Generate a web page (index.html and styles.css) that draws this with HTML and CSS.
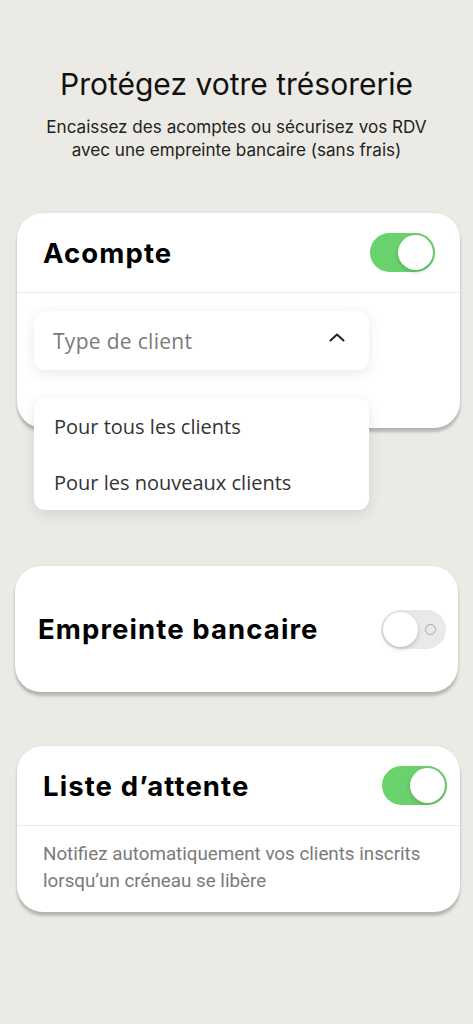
FILE: index.html
```html
<!DOCTYPE html>
<html lang="fr">
<head>
<meta charset="utf-8">
<title>Protégez votre trésorerie</title>
<link rel="stylesheet" href="styles.css">
</head>
<body>
<main class="page">
  <header class="intro">
    <h1 class="intro-title">Protégez votre trésorerie</h1>
    <p class="intro-sub">Encaissez des acomptes ou sécurisez vos RDV<br>avec une empreinte bancaire (sans frais)</p>
  </header>

  <section class="card card-deposit">
    <div class="card-head">
      <h2 class="card-title">Acompte</h2>
      <span class="toggle on"><span class="thumb"></span></span>
    </div>
    <div class="card-body">
      <div class="select">
        <span class="select-label">Type de client</span>
        <svg class="chev" width="16" height="9" viewBox="0 0 16 9"><path d="M1.5 7.5 L8 1.5 L14.5 7.5" fill="none" stroke="#222" stroke-width="2" stroke-linecap="round" stroke-linejoin="round"/></svg>
      </div>
      <ul class="menu">
        <li class="menu-item">Pour tous les clients</li>
        <li class="menu-item">Pour les nouveaux clients</li>
      </ul>
    </div>
  </section>

  <section class="card card-print">
    <div class="card-head tall">
      <h2 class="card-title">Empreinte bancaire</h2>
      <span class="toggle off"><span class="thumb"></span><span class="off-mark"></span></span>
    </div>
  </section>

  <section class="card card-wait">
    <div class="card-head">
      <h2 class="card-title">Liste d’attente</h2>
      <span class="toggle on"><span class="thumb"></span></span>
    </div>
    <p class="card-desc">Notifiez automatiquement vos clients inscrits<br>lorsqu’un créneau se libère</p>
  </section>
</main>
</body>
</html>
```
FILE: styles.css
```css
* { box-sizing: border-box; }
html, body { margin: 0; padding: 0; }
body {
  background: #ECEAE5;
  font-family: "Inter", "Liberation Sans", sans-serif;
  color: #111;
  width: 473px;
  min-height: 1024px;
}
.page {
  display: flex;
  flex-direction: column;
  padding: 66px 13px 0 17px;
}
.intro { text-align: center; margin-left: -4px; }
.intro-title {
  margin: 0;
  font-size: 30px;
  font-weight: 400;
  line-height: 37px;
  color: #111;
  letter-spacing: 0;
}
.intro-sub {
  margin: 12px 0 0;
  font-size: 17.1px;
  line-height: 23px;
  color: #222;
  letter-spacing: 0;
}
.card {
  background: #fff;
  border-radius: 26px;
  box-shadow: 0 4px 3px rgba(0,0,0,0.22), 0 0 3px rgba(0,0,0,0.06);
}
.card-deposit { margin-top: 52px; position: relative; z-index: 2; }
.card-print { margin-top: 138px; margin-left: -2px; margin-right: 2px; }
.card-wait { margin-top: 54px; }
.card-head {
  display: flex;
  align-items: center;
  justify-content: space-between;
  height: 80px;
  padding: 0 25px 0 26px;
  border-bottom: 1px solid #ebebeb;
}
.card-head.tall {
  height: 126px;
  border-bottom: 0;
  padding: 0 12px 0 23px;
}
.card-title {
  margin: 0;
  font-size: 27.5px;
  font-weight: 700;
  letter-spacing: 1.1px;
  color: #000;
}
.card-wait .card-head { padding-right: 13px; }
.toggle {
  position: relative;
  display: block;
  width: 65px;
  height: 39px;
  border-radius: 20px;
  flex: none;
}
.toggle.on { background: #6AD26D; }
.toggle.off { background: #E9E9EA; }
.thumb {
  position: absolute;
  top: 2px;
  width: 35px;
  height: 35px;
  border-radius: 50%;
  background: #fff;
  box-shadow: 0 2px 4px rgba(0,0,0,0.18), 0 0 1px rgba(0,0,0,0.12);
}
.toggle.on .thumb { right: 2px; }
.toggle.off .thumb { left: 2px; }
.off-mark {
  position: absolute;
  right: 10px;
  top: 14px;
  width: 11px;
  height: 11px;
  border-radius: 50%;
  border: 1.3px solid #aaa;
}
.card-body {
  position: relative;
  padding: 18px 91px 58px 17px;
}
.select {
  display: flex;
  align-items: center;
  justify-content: space-between;
  height: 59px;
  padding: 0 24px 0 19px;
  background: #fff;
  border-radius: 11px;
  box-shadow: 0 3px 14px rgba(0,0,0,0.09);
}
.select-label {
  font-family: "Open Sans", "Liberation Sans", sans-serif;
  font-size: 21px;
  color: #7a7a7a;
  letter-spacing: 0.3px;
}
.chev { margin-top: -6px; }
.menu {
  position: absolute;
  left: 17px;
  top: 105px;
  width: 335px;
  margin: 0;
  padding: 0;
  list-style: none;
  background: #fff;
  border-radius: 11px;
  box-shadow: 0 4px 14px rgba(0,0,0,0.10);
}
.menu-item {
  height: 56px;
  display: flex;
  align-items: center;
  padding-left: 20px;
  font-family: "Open Sans", "Liberation Sans", sans-serif;
  font-size: 20px;
  color: #333;
  letter-spacing: 0;
}
.card-desc {
  margin: 0;
  padding: 15px 26px 17px;
  font-family: "Roboto", "Liberation Sans", sans-serif;
  font-size: 18.8px;
  line-height: 27px;
  color: #7a7a7a;
}
```
